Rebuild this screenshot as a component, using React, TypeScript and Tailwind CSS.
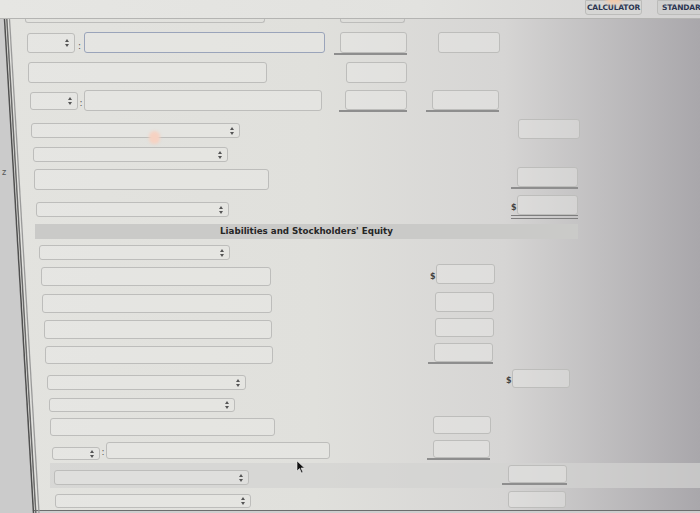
import React from "react";

const BOX = "border border-[#bdbdbb] rounded-[3px] bg-[#ebebe8]/40";

function Arrows() {
  return (
    <svg width="4" height="8" viewBox="0 0 4 8" className="shrink-0">
      <path d="M2 0 L4 3 L0 3 Z M2 8 L4 5 L0 5 Z" fill="#555" />
    </svg>
  );
}

function Sel({ cls }: { cls: string }) {
  return (
    <div className={`${BOX} shrink-0 flex items-center justify-end pr-[5px] ${cls}`}>
      <Arrows />
    </div>
  );
}

function Inp({ cls }: { cls: string }) {
  return <div className={`${BOX} shrink-0 ${cls}`} />;
}

function Colon({ cls }: { cls: string }) {
  return (
    <span className={`shrink-0 self-end text-center text-[9px] leading-none text-[#555] pb-[3px] ${cls}`}>:</span>
  );
}

function Amt({
  cls,
  box,
  line,
  dollar,
}: {
  cls: string;
  box: string;
  line?: "single" | "double";
  dollar?: boolean;
}) {
  const l =
    line === "single"
      ? "border-b-2 border-[#8e8e8e]"
      : line === "double"
      ? "border-b-[4px] border-double border-[#7e7e7e]"
      : "";
  return (
    <div className={`flex items-end shrink-0 ${l} ${cls}`}>
      <span className="w-[6px] text-[8px] leading-none font-bold text-[#444] pb-[3px]">{dollar ? "$" : ""}</span>
      <div className={`${BOX} ${box}`} />
    </div>
  );
}

export default function App() {
  return (
    <div className="relative w-[700px] h-[513px] overflow-hidden font-['DejaVu_Sans',sans-serif] bg-[linear-gradient(90deg,#e3e3df_0%,#e0e0dc_45%,#d6d5d4_72%,#a9a7ab_100%)]">
      {/* top bar */}
      <div className="h-[19px] border-b border-[#b4b4b2] bg-[linear-gradient(90deg,#e6e6e3_0%,#e2e2df_60%,#d3d2d2_100%)] flex items-start overflow-hidden">
        <div className="ml-[585px] shrink-0 w-[57px] h-[15px] bg-[#d6d6d4] border border-[#bcbcba] rounded-b-[3px] flex items-center justify-center text-[7.5px] font-bold text-[#2c3652] tracking-tight">
          CALCULATOR
        </div>
        <div className="ml-[15px] shrink-0 w-[60px] h-[15px] bg-[#d0d0cf] border border-[#bcbcba] rounded-b-[3px] flex items-center pl-[4px] text-[7.5px] font-bold text-[#2c3652] tracking-tight whitespace-nowrap">
          STANDARD
        </div>
      </div>

      {/* R0 partial */}
      <div className="flex h-[4px]">
        <div className="ml-[25px] w-[240px] h-[4px] border-x border-b border-[#bdbdbb] rounded-b-[3px]" />
        <div className="ml-[75px] w-[65px] h-[4px] border-x border-b border-[#bdbdbb] rounded-b-[3px]" />
      </div>

      {/* R1 */}
      <div className="flex items-start h-[22px] mt-[9px]">
        <Sel cls="ml-[27px] w-[48px] h-[20px] mt-[1px]" />
        <Colon cls="w-[9px]" />
        <div className="shrink-0 w-[241px] h-[21px] border border-[#9aa4ba] rounded-[3px] bg-[#ebebe8]/40" />
        <Amt cls="ml-[9px]" box="w-[67px] h-[21px]" line="single" />
        <Amt cls="ml-[25px]" box="w-[62px] h-[21px]" />
      </div>

      {/* R2 */}
      <div className="flex items-start h-[22px] mt-[8px]">
        <Inp cls="ml-[28px] w-[239px] h-[21px]" />
        <Amt cls="ml-[73px]" box="w-[61px] h-[21px]" />
      </div>

      {/* R3 */}
      <div className="flex items-start h-[21px] mt-[6px]">
        <Sel cls="ml-[30px] w-[48px] h-[18px] mt-[2px]" />
        <Colon cls="w-[6px]" />
        <Inp cls="w-[238px] h-[21px]" />
        <Amt cls="ml-[17px]" box="w-[62px] h-[20px]" line="single" />
        <Amt cls="ml-[19px]" box="w-[67px] h-[20px]" line="single" />
      </div>

      {/* R4 */}
      <div className="flex items-start h-[20px] mt-[8px]">
        <Sel cls="ml-[31px] w-[209px] h-[15px] mt-[4px]" />
        <Amt cls="ml-[272px]" box="w-[62px] h-[20px]" />
      </div>

      {/* R5 */}
      <div className="flex items-start h-[16px] mt-[8px]">
        <Sel cls="ml-[33px] w-[195px] h-[15px]" />
      </div>

      {/* R6 */}
      <div className="flex items-start h-[23px] mt-[4px]">
        <Inp cls="ml-[34px] w-[235px] h-[21px] mt-[2px]" />
        <Amt cls="ml-[242px]" box="w-[61px] h-[20px]" line="single" />
      </div>

      {/* R7 */}
      <div className="flex items-start h-[24px] mt-[5px]">
        <Sel cls="ml-[36px] w-[193px] h-[15px] mt-[7px]" />
        <Amt cls="ml-[282px]" box="w-[61px] h-[20px]" line="double" dollar />
      </div>

      {/* header */}
      <div className="flex h-[15px] mt-[5px]">
        <div className="ml-[35px] w-[543px] h-[15px] bg-[#cacac8] flex items-center justify-center text-[8.7px] font-bold text-[#262626]">
          Liabilities and Stockholders' Equity
        </div>
      </div>

      {/* R8 */}
      <div className="flex items-start h-[15px] mt-[6px]">
        <Sel cls="ml-[39px] w-[191px] h-[15px]" />
      </div>

      {/* R9 */}
      <div className="flex items-start h-[22px] mt-[4px]">
        <Inp cls="ml-[41px] w-[230px] h-[19px] mt-[3px]" />
        <Amt cls="ml-[159px]" box="w-[59px] h-[20px]" dollar />
      </div>

      {/* R10 */}
      <div className="flex items-start h-[21px] mt-[6px]">
        <Inp cls="ml-[42px] w-[230px] h-[19px] mt-[2px]" />
        <Amt cls="ml-[157px]" box="w-[59px] h-[20px]" />
      </div>

      {/* R11 */}
      <div className="flex items-start h-[21px] mt-[5px]">
        <Inp cls="ml-[44px] w-[228px] h-[19px] mt-[2px]" />
        <Amt cls="ml-[157px]" box="w-[59px] h-[19px]" />
      </div>

      {/* R12 */}
      <div className="flex items-start h-[21px] mt-[4px]">
        <Inp cls="ml-[45px] w-[228px] h-[18px] mt-[3px]" />
        <Amt cls="ml-[155px]" box="w-[59px] h-[19px]" line="single" />
      </div>

      {/* R13 */}
      <div className="flex items-start h-[21px] mt-[5px]">
        <Sel cls="ml-[47px] w-[199px] h-[15px] mt-[6px]" />
        <Amt cls="ml-[260px]" box="w-[58px] h-[19px]" dollar />
      </div>

      {/* R14 */}
      <div className="flex items-start h-[14px] mt-[8px]">
        <Sel cls="ml-[49px] w-[186px] h-[14px]" />
      </div>

      {/* R15 */}
      <div className="flex items-start h-[20px] mt-[4px]">
        <Inp cls="ml-[50px] w-[225px] h-[18px] mt-[2px]" />
        <Amt cls="ml-[152px]" box="w-[58px] h-[18px]" />
      </div>

      {/* R16 */}
      <div className="flex items-start h-[20px] mt-[4px]">
        <Sel cls="ml-[52px] w-[48px] h-[13px] mt-[7px]" />
        <Colon cls="w-[6px]" />
        <Inp cls="w-[224px] h-[17px] mt-[2px]" />
        <Amt cls="ml-[97px]" box="w-[57px] h-[18px]" line="single" />
      </div>

      {/* R17 band */}
      <div className="flex h-[25px] mt-[3px]">
        <div className="ml-[50px] flex-1 flex items-start bg-[#d3d3d1]/70">
          <Sel cls="ml-[4px] w-[195px] h-[15px] mt-[7px]" />
          <Amt cls="ml-[253px] mt-[2px]" box="w-[59px] h-[18px]" line="single" />
        </div>
      </div>

      {/* R18 */}
      <div className="flex items-start h-[17px] mt-[3px]">
        <Sel cls="ml-[55px] w-[196px] h-[14px] mt-[3px]" />
        <Amt cls="ml-[251px]" box="w-[58px] h-[17px]" />
      </div>

      <div className="mt-[2px] h-[3px] border-t border-[#6d6d6d] bg-[#cfcfcf]" />

      {/* bezel on the left, photo edge */}
      <svg className="absolute left-0 top-[19px] pointer-events-none" width="48" height="494" viewBox="0 0 48 494">
        <polygon points="0,0 4,0 33,494 0,494" fill="#cbcbcb" />
        <line x1="4.5" y1="0" x2="33.5" y2="494" stroke="#4f4f4f" strokeWidth="1.5" />
        <line x1="6.8" y1="0" x2="35.8" y2="494" stroke="#6a6a6a" strokeWidth="1.5" />
        <line x1="9.5" y1="0" x2="39" y2="494" stroke="#9a9a9a" strokeWidth="1.3" />
        <text x="2" y="156" fontSize="8" fill="#555">z</text>
      </svg>

      {/* glare spots */}
      <div className="absolute left-[149px] top-[131px] w-[11px] h-[13px] rounded-full bg-[#f6d2c2] blur-[1.5px]" />
      <div className="absolute left-[606px] top-[-6px] w-[16px] h-[10px] rounded-full bg-[#f3c9a8] blur-[2px]" />

      {/* mouse pointer */}
      <svg className="absolute left-[296px] top-[460px]" width="10" height="14" viewBox="0 0 10 14">
        <path d="M1 1 L1 11 L3.5 8.5 L5.5 13 L7 12.3 L5 8 L8.5 8 Z" fill="#111" stroke="#eee" strokeWidth="0.6" />
      </svg>
    </div>
  );
}
